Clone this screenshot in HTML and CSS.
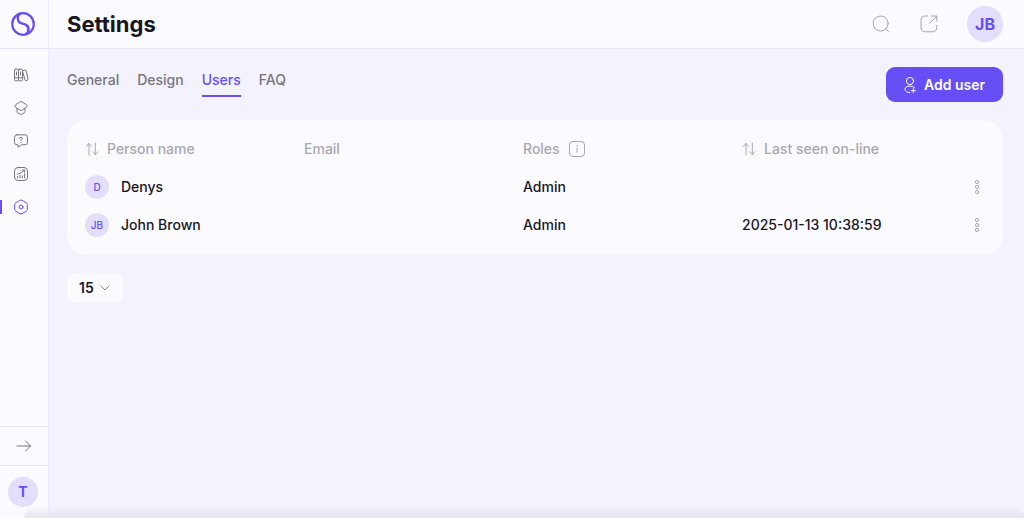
FILE: index.html
```html
<!DOCTYPE html>
<html lang="en">
<head>
    <meta charset="UTF-8">
    <meta name="viewport" content="width=device-width, initial-scale=1.0">
    <title>Settings</title>
    <link rel="stylesheet" href="styles.css">
</head>
<body>

    <aside class="sidebar">
        <a class="logo" href="#" aria-label="Home">
            <svg width="26" height="26" viewBox="0 0 26 26">
                <circle cx="13" cy="13" r="10.8" stroke-width="2.2"/>
                <path stroke-width="2" d="M10.5 2.6C6.2 5.2 7 11 11.2 12.2L14.8 13.3C19.5 14.6 20.2 20 15.6 23.2"/>
                <path stroke-width="2" d="M8 7C8 12 11 12 14 13C18 14.3 18.4 17 17.8 19.5"/>
            </svg>
        </a>

        <nav class="side-nav" aria-label="Main">
            <a href="#" aria-label="Library">
                <svg width="16" height="16" viewBox="0 0 16 16">
                    <rect x="1.5" y="2.2" width="4" height="11.6" rx="1"/>
                    <rect x="5.5" y="2.2" width="4" height="11.6" rx="1"/>
                    <path d="M10.2 3.6L12.2 3.1Q13 2.9 13.2 3.7L15 12.2Q15.2 13 14.4 13.2L13 13.6Q12.2 13.8 12 13L9.8 5M1.5 10.8H9.5M3.5 5V8M7.5 5V8"/>
                </svg>
            </a>
            <a href="#" aria-label="Courses">
                <svg width="16" height="16" viewBox="0 0 16 16">
                    <path d="M7 1.9Q8 1.3 9 1.9L13.6 4.9Q15.2 6 13.6 7.1L9 10.1Q8 10.7 7 10.1L2.4 7.1Q0.8 6 2.4 4.9ZM4 8.5V11.6Q4 12.4 4.8 12.9L6.6 13.9Q8 14.7 9.4 13.9L11.2 12.9Q12 12.4 12 11.6V8.5"/>
                </svg>
            </a>
            <a href="#" aria-label="Questions">
                <svg width="16" height="16" viewBox="0 0 16 16">
                    <path d="M4 1.8H12Q14.5 1.8 14.5 4.3V9.3Q14.5 11.8 12 11.8H8.5L5 14.3V11.8H4Q1.5 11.8 1.5 9.3V4.3Q1.5 1.8 4 1.8Z"/>
                    <path d="M6.7 5.6Q6.8 4.3 8 4.3Q9.3 4.3 9.3 5.5Q9.3 6.2 8.6 6.6Q8 7 8 7.6M8 9.2V9.5"/>
                </svg>
            </a>
            <a href="#" aria-label="Reports">
                <svg width="16" height="16" viewBox="0 0 16 16">
                    <rect x="1.5" y="1.5" width="13" height="13" rx="3.5"/>
                    <path d="M4.5 12V10.5M7 12V9.3M9.3 12V9.8M11.6 12V7.5M4.3 8.3Q8.5 7.5 11.3 4.2M9.3 4H11.6V6.2"/>
                </svg>
            </a>
            <a class="active" href="#" aria-label="Settings" aria-current="page">
                <svg width="16" height="16" viewBox="0 0 16 16">
                    <path d="M7 1.3Q8 .8 9 1.3L13.3 3.8Q14.3 4.4 14.3 5.5V10.5Q14.3 11.6 13.3 12.2L9 14.7Q8 15.2 7 14.7L2.7 12.2Q1.7 11.6 1.7 10.5V5.5Q1.7 4.4 2.7 3.8Z"/>
                    <circle cx="8" cy="8" r="2"/>
                </svg>
            </a>
        </nav>

        <button class="expand" type="button" aria-label="Expand menu">
            <svg width="16" height="14" viewBox="0 0 16 14">
                <path d="M1 7H14.5M9.5 2L14.5 7L9.5 12"/>
            </svg>
        </button>
        <div class="account">
            <button class="avatar avatar-medium" type="button">T</button>
        </div>
    </aside>

    <div class="page">
        <header class="topbar">
            <h1>Settings</h1>
            <div class="top-actions">
                <button type="button" aria-label="Search">
                    <svg width="20" height="20" viewBox="0 0 20 20">
                        <circle cx="9.7" cy="9.5" r="7.5"/>
                        <path d="M15.6 15.4L17.8 17.6"/>
                    </svg>
                </button>
                <button type="button" aria-label="Open site">
                    <svg width="20" height="20" viewBox="0 0 20 20">
                        <path d="M8.5 2H6.5Q2 2 2 6.5V13.3Q2 17.8 6.5 17.8H13.3Q17.8 17.8 17.8 13.3V11.3M10.3 9.5L17.6 2.2M12.5 2H17.8V7.3"/>
                    </svg>
                </button>
                <button class="avatar avatar-large" type="button">JB</button>
            </div>
        </header>

        <main class="content">
            <div class="toolbar">
                <nav class="tabs" aria-label="Settings sections">
                    <a href="#">General</a>
                    <a href="#">Design</a>
                    <a class="active" href="#" aria-current="page">Users</a>
                    <a href="#">FAQ</a>
                </nav>
                <button class="add-user" type="button">
                    <svg width="12" height="18" viewBox="0 0 12 18">
                        <circle cx="6" cy="5" r="3.6"/>
                        <path d="M10.5 11.6Q9 10 6 10Q1 10.2 1 13.3Q1 16.3 5.8 16.5M9.3 12.6V16.8M7.2 14.7H11.4"/>
                    </svg>
                    Add user
                </button>
            </div>

            <div class="card">
                <table class="users">
                    <thead>
                        <tr>
                            <th scope="col">
                                <button class="sort" type="button">
                                    <svg width="14" height="14" viewBox="0 0 14 14">
                                        <path d="M4 13V1.5M1.2 4.3L4 1.5L6.8 4.3M10.3 1V12.5M7.5 9.7L10.3 12.5L13.1 9.7"/>
                                    </svg>
                                    Person name
                                </button>
                            </th>
                            <th scope="col">Email</th>
                            <th scope="col">
                                <span class="with-info">
                                    Roles
                                    <button type="button" aria-label="About roles">
                                        <svg width="18" height="18" viewBox="0 0 18 18">
                                            <rect x="1.5" y="1.5" width="15" height="15" rx="3.5"/>
                                            <path d="M9 8V12.3M9 5.4V6.4"/>
                                        </svg>
                                    </button>
                                </span>
                            </th>
                            <th scope="col">
                                <button class="sort" type="button">
                                    <svg width="14" height="14" viewBox="0 0 14 14">
                                        <path d="M4 13V1.5M1.2 4.3L4 1.5L6.8 4.3M10.3 1V12.5M7.5 9.7L10.3 12.5L13.1 9.7"/>
                                    </svg>
                                    Last seen on-line
                                </button>
                            </th>
                            <td class="menu-col"></td>
                        </tr>
                    </thead>
                    <tbody>
                        <tr>
                            <td><span class="person"><span class="avatar avatar-small">D</span>Denys</span></td>
                            <td></td>
                            <td>Admin</td>
                            <td></td>
                            <td>
                                <button class="row-menu" type="button" aria-label="Actions for Denys">
                                    <svg width="6" height="16" viewBox="0 0 6 16">
                                        <circle cx="3" cy="3" r="1.6"/>
                                        <circle cx="3" cy="8" r="1.6"/>
                                        <circle cx="3" cy="13" r="1.6"/>
                                    </svg>
                                </button>
                            </td>
                        </tr>
                        <tr>
                            <td><span class="person"><span class="avatar avatar-small">JB</span>John Brown</span></td>
                            <td></td>
                            <td>Admin</td>
                            <td>2025-01-13 10:38:59</td>
                            <td>
                                <button class="row-menu" type="button" aria-label="Actions for John Brown">
                                    <svg width="6" height="16" viewBox="0 0 6 16">
                                        <circle cx="3" cy="3" r="1.6"/>
                                        <circle cx="3" cy="8" r="1.6"/>
                                        <circle cx="3" cy="13" r="1.6"/>
                                    </svg>
                                </button>
                            </td>
                        </tr>
                    </tbody>
                </table>
            </div>

            <label class="page-size">
                <select aria-label="Rows per page">
                    <option>15</option>
                    <option>30</option>
                    <option>50</option>
                </select>
                <svg width="10" height="6" viewBox="0 0 10 6">
                    <path d="M1 1L5 5L9 1"/>
                </svg>
            </label>
        </main>
    </div>

</body>
</html>
```
FILE: styles.css
```css
* {
    box-sizing: border-box;
}

body {
    margin: 0;
    min-height: 100vh;
    display: flex;
    background: #f4f2fd;
    color: #17171f;
    font-family: Inter, "Liberation Sans", sans-serif;
    font-size: 14px;
    font-weight: 500;
    line-height: 20px;
}

/* Soft shade along the bottom edge of the window */
body::after {
    content: "";
    position: fixed;
    left: 24px;
    right: 0;
    bottom: 0;
    height: 12px;
    background: linear-gradient(transparent, #e6e4ee);
    border-radius: 24px 24px 0 0;
    pointer-events: none;
}

a {
    color: inherit;
    text-decoration: none;
}

button {
    padding: 0;
    border: 0;
    background: none;
    color: inherit;
    font: inherit;
    cursor: pointer;
}

svg {
    display: block;
    flex: none;
    fill: none;
    stroke: currentColor;
    stroke-linecap: round;
    stroke-linejoin: round;
}

/* Sidebar */
.sidebar {
    flex: none;
    width: 49px;
    display: flex;
    flex-direction: column;
    background: #fbfaff;
    border-right: 1px solid #eceafb;
    color: #777680;
}

.logo {
    height: 49px;
    display: flex;
    align-items: center;
    padding-left: 10px;
    border-bottom: 1px solid #e8e5fb;
    color: #684ff5;
}

.side-nav {
    flex: 1;
    padding-top: 9px;
}

.side-nav a {
    height: 33px;
    display: flex;
    align-items: center;
    padding-left: 11px;
    border-left: 2px solid transparent;
}

.side-nav .active {
    color: #684ff5;
    background: linear-gradient(#684ff5, #684ff5) left center / 2px 14px no-repeat border-box;
}

.expand {
    height: 39px;
    display: flex;
    align-items: center;
    padding-left: 16px;
    border-top: 1px solid #e8e5fb;
}

.account {
    height: 53px;
    display: flex;
    align-items: center;
    padding-left: 8px;
    border-top: 1px solid #e8e5fb;
}

.avatar {
    flex: none;
    display: flex;
    align-items: center;
    justify-content: center;
    border-radius: 50%;
    background: #e2defc;
    color: #684ff5;
}

.avatar-small {
    width: 24px;
    height: 24px;
    font-size: 10px;
}

.avatar-medium {
    width: 30px;
    height: 30px;
    font-weight: 700;
}

.avatar-large {
    width: 36px;
    height: 36px;
    font-size: 16px;
    font-weight: 700;
}

/* Top bar */
.page {
    flex: 1;
    min-width: 0;
}

.topbar {
    height: 49px;
    display: flex;
    align-items: center;
    justify-content: space-between;
    padding: 0 21px 0 18px;
    background: #fbfaff;
    border-bottom: 1px solid #e8e5fb;
}

h1 {
    margin: 0;
    font-size: 22px;
    font-weight: 700;
    line-height: 28px;
}

.top-actions {
    display: flex;
    align-items: center;
    gap: 28px;
    color: #a3a2ab;
}

/* Content */
.content {
    padding: 18px 21px 18px 18px;
}

.toolbar {
    display: flex;
    justify-content: space-between;
    align-items: flex-start;
    margin-bottom: 18px;
}

.tabs {
    display: flex;
    gap: 18px;
    color: #77767f;
}

.tabs a {
    padding: 3px 0 5px;
    border-bottom: 2px solid transparent;
}

.tabs .active {
    color: #684ff5;
    border-color: #684ff5;
}

.add-user {
    height: 35px;
    display: flex;
    align-items: center;
    gap: 8px;
    padding: 0 18px;
    border-radius: 9px;
    background: #664ef5;
    color: #fff;
    font-weight: 600;
}

.card {
    padding: 10px 18px 11px;
    border-radius: 20px;
    background: #fbfaff;
}

.users {
    width: 100%;
    table-layout: fixed;
    border-collapse: collapse;
}

.users th,
.users td {
    height: 38px;
    padding: 0;
    text-align: left;
}

.users th {
    color: #a9a8b0;
    font-weight: 500;
}

.users .menu-col {
    width: 24px;
}

.sort,
.with-info,
.person {
    display: flex;
    align-items: center;
    gap: 8px;
}

.person {
    gap: 12px;
}

.row-menu {
    display: block;
    margin: 0 auto 0 13px;
    color: #a9a8b4;
}

.page-size {
    display: inline-grid;
    align-items: center;
    margin-top: 18px;
    border-radius: 9px;
    background: #fbfaff;
    color: #8d8c96;
}

.page-size select,
.page-size svg {
    grid-area: 1 / 1;
}

.page-size select {
    appearance: none;
    width: 56px;
    height: 30px;
    padding: 0 12px;
    border: 0;
    border-radius: 9px;
    background: none;
    color: #17171f;
    font: inherit;
    font-weight: 600;
}

.page-size svg {
    justify-self: end;
    margin-right: 13px;
    pointer-events: none;
}
```
